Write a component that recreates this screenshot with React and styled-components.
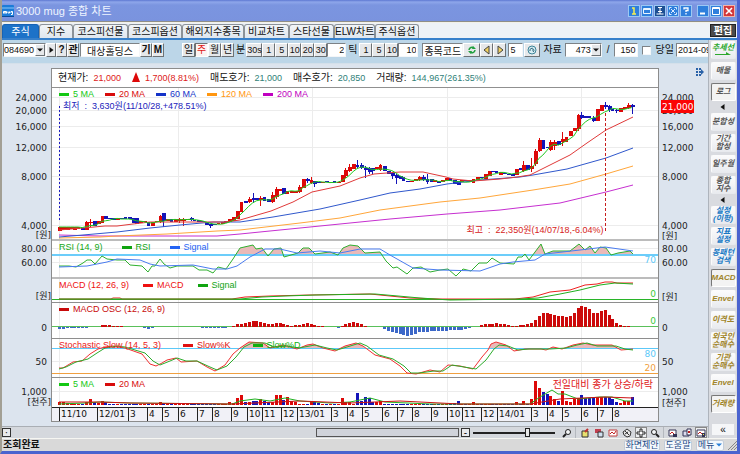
import React from "react";
import styled, { createGlobalStyle, css } from "styled-components";

const Global = createGlobalStyle`
  * { box-sizing: border-box; }
  body { margin: 0; background: #3b56c4; }
  body, button, input, select {
    font-family: "Liberation Sans", "Noto Sans CJK KR", sans-serif;
    font-size: 10px;
    line-height: 12px;
    color: #111;
  }
  button, input, select { margin: 0; padding: 0; border-radius: 0; }
`;

/* ---------- window frame ---------- */

const Window = styled.div`
  display: flex;
  flex-direction: column;
  min-height: 100vh;
  background: #dce4ee;
  border-left: 2px solid #a29f94;
  border-right: 3px solid #4a63cf;
  border-bottom: 3px solid #4a63cf;
`;

const TitleBar = styled.header`
  display: flex;
  align-items: center;
  height: 23px;
  padding: 0 1px 0 0;
  background: linear-gradient(#5d78d2, #8ea6ea 2px, #7b95e0 5px, #7a93de);
  border-bottom: 1px solid #f3f1e8;
  box-shadow: inset 0 -1px 0 #8f8e88;
`;

const Title = styled.h1`
  flex: 1;
  margin: 0 0 0 1px;
  font-size: 11px;
  line-height: 16px;
  font-weight: 400;
  color: #eef4ff;
`;

const TitleButton = styled.button`
  display: grid;
  place-items: center;
  width: 12px;
  height: 12px;
  margin-right: ${(p) => (p.$last ? 5 : 1)}px;
  border: 1px solid ${(p) => (p.$danger ? "#f4b4a8" : "#9cc8f4")};
  background: ${(p) => (p.$danger ? "#d4383c" : p.$pressed ? "#1c4f94" : "#2f7fdc")};
`;

const TabBar = styled.nav`
  display: flex;
  align-items: flex-end;
  height: 17px;
  background: #eef2f7;
  border-bottom: 2px solid #3780cb;
`;

const Tab = styled.button`
  width: ${(p) => p.$w}px;
  height: 14px;
  padding: 0;
  white-space: nowrap;
  border: 1px solid ${(p) => (p.$active ? "#1763b5" : "#8c9298")};
  border-bottom: 0;
  border-radius: 3px 3px 0 0;
  background: ${(p) => (p.$active ? "#1d72c8" : "linear-gradient(#f2f5f8, #dfe6ee)")};
  color: ${(p) => (p.$active ? "#fff" : "#111")};
`;

const EditButton = styled.button`
  align-self: center;
  width: 26px;
  height: 13px;
  margin-left: auto;
  margin-right: 1px;
  border: 1px solid #222;
  background: #4b4b4b;
  color: #fff;
  font-weight: 700;
`;

const Body = styled.div`
  display: flex;
  flex: 1;
  min-width: 0;
`;

const Work = styled.main`
  flex: 1;
  min-width: 0;
  display: flex;
  flex-direction: column;
`;

/* ---------- toolbar ---------- */

const Toolbar = styled.div`
  display: flex;
  align-items: center;
  height: 24px;
  padding: 0 0 3px 1px;
  overflow: hidden;
  background: #bcd6e8;
  border-bottom: 1px solid #d4e0ea;
`;

const Group = styled.div`
  display: flex;
  flex: none;
  align-items: center;
  gap: ${(p) => p.$gap || 0}px;
  margin-right: ${(p) => p.$after || 0}px;
`;

const inset = css`
  border: 1px solid;
  border-color: #7d8286 #f4f6f8 #f4f6f8 #7d8286;
  background: #fff;
`;

const Field = styled.input`
  flex: none;
  width: ${(p) => p.$w}px;
  height: 14px;
  padding: 0 1px;
  font-size: ${(p) => p.$size || 9}px;
  text-align: ${(p) => p.$align || "left"};
  ${inset}
`;

const Btn = styled.button`
  display: grid;
  place-items: center;
  flex: none;
  width: ${(p) => p.$w || 13}px;
  height: 14px;
  border: 1px solid;
  border-color: ${(p) => (p.$on ? "#6d7275 #fff #fff #6d7275" : "#fff #6d7275 #6d7275 #fff")};
  background: ${(p) => (p.$on ? "#fdf4f2" : "#e6e8ea")};
  color: ${(p) => (p.$on ? "#e01818" : "#111")};
  font-size: ${(p) => p.$size || 10}px;
  font-weight: ${(p) => (p.$bold ? 700 : 400)};
  white-space: nowrap;
`;

const Caption = styled.span`
  white-space: nowrap;
`;

const SelectBox = styled.span`
  display: flex;
  height: 14px;
  ${inset}
`;

const Select = styled.select`
  appearance: none;
  width: ${(p) => p.$w}px;
  padding: 0;
  border: 0;
  background: #fff;
  font-size: 9px;
  text-align-last: ${(p) => p.$align || "right"};
`;

const Arrow = styled.span`
  display: grid;
  place-items: center;
  width: 10px;
  background: #e6e8ea;
  border: 1px solid;
  border-color: #fff #6d7275 #6d7275 #fff;
`;

const Check = styled.input`
  appearance: none;
  width: 9px;
  height: 9px;
  margin: 0;
  ${inset}
`;

const CheckLabel = styled.label`
  display: flex;
  align-items: center;
  gap: 5px;
  white-space: nowrap;
`;

/* ---------- chart ---------- */

const ChartArea = styled.section`
  display: grid;
  grid-template-columns: 49px minmax(0, 1fr) 49px;
  padding: 4px 0;
`;

const Axis = styled.svg`
  display: block;
  width: 49px;
  height: 354px;
  font-family: "DejaVu Sans", "Noto Sans CJK KR", sans-serif;
  font-size: 9px;
  fill: #222;
`;

const Frame = styled.div`
  display: flex;
  flex-direction: column;
  border: 1px solid #8c8c8c;
  background: #fff;
`;

const Quote = styled.dl`
  display: flex;
  align-items: center;
  gap: 11px;
  height: 19px;
  margin: 0;
  padding: 0 6px;
  border-bottom: 1px solid #909090;
  white-space: nowrap;
  overflow: hidden;
`;

const QuoteItem = styled.div`
  display: flex;
  align-items: center;
  gap: 5px;
  dt, dd { margin: 0; }
  dd { color: ${(p) => p.$color}; font-size: 9px; }
`;

const Pane = styled.div`
  position: relative;
  height: ${(p) => p.$h}px;
  border-bottom: ${(p) => p.$rule || "1px solid #8e8e8e"};
`;

const Plot = styled.svg`
  display: block;
  width: 100%;
  height: 100%;
`;

const Legend = styled.div`
  position: absolute;
  top: 1px;
  left: 7px;
  display: flex;
  align-items: center;
  gap: ${(p) => p.$gap || 14}px;
  font-size: 9px;
  line-height: 11px;
  white-space: nowrap;
`;

const Key = styled.span`
  display: flex;
  align-items: center;
  gap: 4px;
  color: ${(p) => p.$color};
  &::before {
    content: "";
    display: ${(p) => (p.$plain ? "none" : "block")};
    width: 10px;
    height: 3px;
    background: ${(p) => p.$color};
  }
`;

const Note = styled.span`
  position: absolute;
  top: ${(p) => p.$top}px;
  left: ${(p) => p.$left || "auto"};
  right: ${(p) => p.$right || "auto"};
  display: flex;
  gap: 5px;
  font-size: ${(p) => p.$size || 9}px;
  line-height: 12px;
  white-space: nowrap;
  color: ${(p) => p.$color};
`;

const LevelNote = styled(Note)`
  font-family: "DejaVu Sans", sans-serif;
`;

const Months = styled.div`
  display: grid;
  grid-template-columns: ${(p) => p.$cols};
  height: 13px;
  background: #f1f1f7;
  font-family: "DejaVu Sans", sans-serif;
  font-size: 9px;
  line-height: 13px;
`;

const Month = styled.span`
  min-width: 0;
  padding-left: 1px;
  border-left: 1px solid #222;
  white-space: nowrap;
`;

/* ---------- bottom strips ---------- */

const ScrollStrip = styled.div`
  display: flex;
  align-items: center;
  height: 12px;
  border-top: 1px solid #aaaeb4;
  background: #d5d8dd;
`;

const StepButton = styled.button`
  display: grid;
  place-items: center;
  flex: none;
  width: 9px;
  height: 9px;
  border: 1px solid #333;
  background: #e9eaec;
  line-height: 6px;
`;

const Track = styled.div`
  display: flex;
  flex: 1;
  min-width: 0;
  margin-right: 2px;
`;

const Thumb = styled.div`
  width: 32%;
  height: 9px;
  margin-left: auto;
  border: 1px solid #555;
  background: #d0d3da;
`;

const Zoom = styled.input`
  appearance: none;
  width: 82px;
  height: 9px;
  margin: 0 6px 0 3px;
  background: linear-gradient(#222, #222) center / 100% 2px no-repeat;
  &::-webkit-slider-thumb {
    appearance: none;
    width: 5px;
    height: 9px;
    border: 1px solid #222;
    background: #e8e8e8;
  }
`;

const Tools = styled.div`
  display: flex;
  gap: 2px;
  padding-right: 1px;
`;

const Tool = styled.button`
  display: grid;
  place-items: center;
  width: 12px;
  height: 11px;
  border: 1px solid ${(p) => (p.$on ? "#888" : "transparent")};
  background: ${(p) => (p.$on ? "#eceef0" : "none")};
`;

const ToolRule = styled.span`
  width: 2px;
  border-left: 1px solid #b4b8be;
`;

const Status = styled.footer`
  display: flex;
  align-items: center;
  height: 13px;
  padding: 0 0 0 1px;
  border-top: 1px solid #f6f6f2;
  background: #d9d9d9;
`;

const StatusText = styled.strong`
  flex: 1;
  line-height: 12px;
`;

const StatusButton = styled.button`
  width: ${(p) => p.$w}px;
  height: 11px;
  margin-right: 4px;
  line-height: 9px;
  border: 1px solid #c3ccd8;
  border-radius: 2px;
  background: #f4f8fc;
  color: #1f4c86;
  white-space: nowrap;
  font-size: 9px;
`;

const StatusMenu = styled(StatusButton)`
  display: flex;
  align-items: center;
  justify-content: center;
  gap: 2px;
`;

/* ---------- side menu ---------- */

const Side = styled.aside`
  display: flex;
  flex-direction: column;
  align-items: center;
  gap: 3px;
  flex: none;
  width: 29px;
  padding: 1px 0 3px;
  border-left: 1px solid #aeb4bc;
  background: #d9dbe0;
`;

const SideButton = styled.button`
  width: 25px;
  height: 18px;
  flex: none;
  border: 1px solid;
  border-color: ${(p) => (p.$on ? "#777 #fff #fff #777" : "#fbfbfb #e8eaee #e8eaee #fbfbfb")};
  border-radius: 2px;
  background: ${(p) => (p.$on ? "#f3f3f3" : "linear-gradient(#fbfbfc, #e9ebef)")};
  color: ${(p) => p.$color || "#555"};
  font-size: 8px;
  line-height: 8px;
  font-weight: ${(p) => (p.$light ? 400 : 700)};
  font-style: italic;
  white-space: pre;
`;

const PenLine = styled.svg`
  display: block;
  margin: 0 auto;
`;

const SideArrow = styled.button`
  display: grid;
  place-items: center;
  width: 25px;
  height: 6px;
  border: 0;
  background: none;
`;

const Fold = styled.button`
  width: 22px;
  height: 11px;
  margin-top: auto;
  border: 0;
  background: #f5f6f8;
  line-height: 9px;
`;

/* ---------- data ---------- */

const RED = "#dd0808";
const BLUE = "#1414b8";
const X0 = 59;
const STEP = 3.87;
const xAt = (i) => X0 + i * STEP;

// colour, body top, body bottom, optional wick top and wick bottom
const CANDLES = `
r227,231 r227,230 r227,230 r227,229 r227,230 r227,229 b228,230 r222,230,221,230 r222,223,219,227 b221,226 r221,224
r216,223 b216,219 b218,219 b218,220 r218,220 b218,219 b217,219 b217,219 b218,223 b218,224 r221,223 r221,222 b222,226
r222,226 r221,222 r216,222,215,223 b213,221,213,227 r219,221 b219,222 r219,222 r219,221,218,223 r219,221,218,226 r219,220 b218,220,217,221
b220,221 b220,222 b221,222 b222,225 b224,226,224,228 b224,225 r223,224 r222,224 r221,223 r219,222 r217,221 r211,219
r202,212 b201,203 r199,202,197,203 b198,200,193,203 b198,200 r198,200,196,206 b197,201 b199,202 r195,202,192,203 r189,197,187,199 r189,191
b188,194 r191,194 r191,193 r191,193 r187,192,185,193 r179,188 b179,181,178,183 r180,183,177,184 b181,184,181,187 b182,183 r182,183
b181,182 r182,183 b181,183 r182,183 r175,182 r170,176,168,178 r167,171,164,172 r164,169 b165,167,160,168 b165,168,163,169 b168,170,166,178
b168,172,167,174 b168,171,168,174 r167,169 r165,170,164,171 b166,171 b171,174 b173,176,172,179 b175,178,174,184 b176,179 b177,181
b181,182 r181,182 r179,181 r177,180,176,181 b177,180,175,181 b179,182,174,184 b179,182 r180,182 b181,183 r180,182 r178,181
b178,181 b180,184 b181,185 r180,182 b180,181 r180,182 r179,183 r177,180 b177,178 r174,179 r171,176 b171,172 b171,173 r172,175
b173,174 b174,175 b174,176 r169,175 b168,170 r165,171,161,172 b165,170 r166,169,158,172 r151,164,149,166 r140,151,138,152 b140,149
b147,148 r142,150,140,151 r142,146,140,150 b141,145 r139,142,132,146 r137,142 r131,136 r128,131 r115,129,114,131 b115,118,112,119
b116,118 b116,118 b118,121,116,122 r109,121 r105,111 b105,107,102,109 b106,110,105,112 b109,111 b110,111,109,113 r108,112 r107,109
r105,108,103,109 b105,107,104,114`
  .trim()
  .split(/\s+/)
  .map((s) => {
    const n = s.slice(1).split(",").map(Number);
    return { up: s[0] === "r", top: n[0], bottom: n[1], high: n[2] ?? n[0], low: n[3] ?? n[1] };
  });

const CLOSES = CANDLES.map((c) => (c.up ? c.top : c.bottom));
const MA5 = CLOSES.map((_, i) => {
  const part = CLOSES.slice(Math.max(0, i - 4), i + 1);
  return `${xAt(i)},${part.reduce((a, b) => a + b, 0) / part.length}`;
}).join(" ");

const MA20 = "59,230 83,228 105,226 117,226 133,224 150,222 167,222 200,222 225,222 233,221 240,220 271,211 293,202 312,192 340,186 360,178 374,174 387,173 400,172 423,172 446,177 453,179 473,181 500,179 517,177 530,175 550,165 570,155 587,143 606,130 633,117";
const MA60 = "59,237 83,235 117,232 150,228 180,225 213,222 240,222 273,217 320,209 360,200 390,193 420,189 447,184 480,180 520,177 533,175 567,169 606,158 633,148";
const MA120 = "59,238 100,237 117,236 167,234 217,231 240,230 300,223 340,218 380,210 440,202 480,198 533,190 570,184 606,174 633,166";
const MA200 = "59,235 100,236 217,236 240,234 300,228 340,224 390,219 447,214 500,210 560,203 606,192 633,185";

const RSI = "59,266 69,266 76,267 83,263 87,260 91,260 95,264 102,256 107,259 117,260 125,260 130,265 142,266 148,272 152,266 155,266 160,259 164,264 170,268 177,266 193,266 199,270 207,270 213,273 218,267 226,269 233,259 240,248 253,245 256,249 262,248 268,256 274,249 281,248 284,257 298,253 303,248 309,248 315,254 330,252 338,255 343,248 350,245 358,246 365,253 380,252 386,261 393,268 397,267 407,274 413,268 421,267 430,272 440,270 448,269 456,276 463,269 471,271 479,263 487,263 492,258 500,263 514,264 518,257 522,257 525,254 529,260 535,252 541,244 545,254 553,251 570,251 579,244 585,250 590,246 595,253 600,247 606,248 611,255 618,253 630,251 633,254";
const RSI_SIGNAL = "59,267 87,266 107,262 117,259 140,260 150,264 160,266 193,265 213,269 227,269 237,266 250,257 265,249 280,249 297,253 320,251 340,253 360,249 380,249 390,255 413,268 440,270 480,271 500,264 513,262 535,260 545,254 580,250 605,247 633,251";
const MACD = "59,299 111,299 113,298 120,298 122,299 232,299 245,297 270,296 310,295 370,294 390,296 410,298 440,299 515,299 533,297 550,292 570,290 585,285 597,284 605,282 612,282 617,283 633,283";
const MACD_SIGNAL = "59,299 240,299 262,297 285,296 315,295 375,294 398,296 420,298 450,300 520,299 538,298 560,294 580,290 600,285 615,283 633,284";
const SLOW_K = "59,368 63,368 73,362 82,361 90,354 98,349 105,347 113,346 125,348 142,354 150,364 156,366 162,363 167,360 176,358 181,362 197,361 207,367 215,371 225,365 233,354 240,348 249,342 263,343 270,348 283,345 297,349 307,345 313,344 323,348 335,351 345,346 356,343 363,346 375,355 390,359 400,366 407,373 416,374 430,370 440,372 448,365 460,366 473,369 482,357 488,350 491,344 496,342 506,345 514,351 525,349 541,349 546,350 553,347 562,349 573,345 583,343 593,345 604,345 612,345 621,350 633,349";
const SLOW_D = "59,369 66,367 76,362 88,359 97,353 105,348 117,346 125,347 145,353 153,361 160,365 170,361 177,358 186,361 197,361 210,367 217,370 227,366 236,357 244,347 252,343 265,343 274,347 287,346 299,348 315,345 327,348 337,350 347,347 360,343 367,346 379,355 393,359 404,366 411,373 419,373 434,371 443,371 452,365 464,367 476,369 486,360 494,349 499,345 508,346 518,350 529,349 550,349 566,348 577,345 587,343 597,346 616,346 625,349 633,350";

// bar heights at successive positions along the time axis; the rest is interpolated
const OSC_POINTS = [[59, -2], [67, -1], [80, -1], [98, 0], [101, 2], [121, 1], [125, 0], [142, 0], [148, -2], [156, 0], [198, 0], [203, -1], [222, -1], [230, 0], [235, 2], [243, 4], [252, 6], [262, 5], [267, 3], [278, 4], [293, 1], [305, 4], [320, 1], [325, 0], [332, 0], [337, -1], [343, 2], [355, 5], [366, 1], [370, 0], [380, 0], [383, -2], [390, -5], [407, -9], [420, -5], [437, -4], [460, -3], [473, 0], [477, 0], [480, 2], [497, 4], [512, 1], [528, 3], [533, 4], [537, 9], [541, 14], [545, 14], [555, 12], [567, 10], [572, 12], [578, 20], [583, 21], [588, 19], [594, 13], [600, 16], [605, 17], [608, 13], [613, 7], [618, 3], [623, 1], [633, 0]];
const oscAt = (x) => {
  const k = OSC_POINTS.findIndex((p) => p[0] >= x);
  if (k <= 0) return OSC_POINTS[0][1];
  const [xa, a] = OSC_POINTS[k - 1];
  const [xb, b] = OSC_POINTS[k];
  return Math.round(a + ((b - a) * (x - xa)) / (xb - xa));
};

const VOLUME = {
  0: 3, 1: 3, 2: 2, 7: 3, 8: 6, 9: 3, 10: 2, 11: 4, 12: 3, 26: 3, 27: 2, 44: 3, 45: 2, 46: 7, 47: 10, 48: 3, 49: 3, 50: 4, 51: 4, 52: 6, 53: 4, 54: 3, 55: 3, 56: 10,
  57: 10, 58: 5, 59: 8, 60: 4, 61: 3, 65: 4, 66: 3, 67: 2, 73: 7, 74: 3, 75: 3, 77: 12, 78: 4, 79: 8, 80: 7, 81: 3, 82: 3, 83: 4,
  102: 2, 103: 4, 107: 3, 118: 3, 120: 4, 122: 6, 123: 24, 124: 17, 125: 13, 126: 11, 127: 9, 128: 6, 129: 4, 130: 14, 131: 4, 132: 3, 133: 6, 134: 7,
  135: 10, 136: 7, 137: 7, 138: 8, 139: 8, 140: 8, 141: 8, 142: 8, 143: 6, 144: 3, 145: 2, 146: 4, 147: 4, 148: 8,
};

const MONTHS = [[59, "11/10"], [97, "12/01"], [128, "3"], [147, "4"], [162, "5"], [178, "6"], [197, "7"], [212, "8"], [231, "9"], [247, "10"], [262, "11"], [281, "12"], [297, "13/01"], [331, "3"], [347, "4"], [362, "5"], [382, "6"], [397, "7"], [412, "8"], [431, "9"], [447, "10"], [462, "11"], [481, "12"], [497, "14/01"], [531, "3"], [547, "4"], [562, "5"], [581, "6"], [597, "7"], [612, "8"]];
const MONTH_COLS = [
  "7fr",
  ...MONTHS.map(([x], i) => `${(MONTHS[i + 1] ? MONTHS[i + 1][0] : 658) - x}fr`),
].join(" ");

const YEARS = [59, 178, 312, 447, 581];

/* ---------- chart parts ---------- */

function Canvas({ y, h, rows = [], label, children }) {
  return (
    <Plot viewBox={`52 ${y} 606 ${h}`} preserveAspectRatio="none" role="img" aria-label={label}>
      <g stroke="#ececec" shapeRendering="crispEdges">
        {YEARS.map((x) => <line key={x} x1={x} x2={x} y1={y} y2={y + h} />)}
        {rows.map((r) => <line key={r} x1="52" x2="658" y1={r} y2={r} />)}
      </g>
      {children}
    </Plot>
  );
}

const Line = ({ points, color, width = 1 }) => (
  <polyline points={points} fill="none" stroke={color} strokeWidth={width} />
);

const Level = ({ y, color, width = 1 }) => (
  <rect x="52" y={y} width="606" height={width} fill={color} shapeRendering="crispEdges" />
);

const Above = ({ id, top, level, points }) => (
  <>
    <clipPath id={id}><rect x="52" y={top} width="606" height={level - top} /></clipPath>
    <polygon points={`59,${level} ${points} 633,${level}`} fill="#e9b9b9" clipPath={`url(#${id})`} />
  </>
);

const PRICE_TICKS = [["24,000", 97], ["20,000", 110], ["16,000", 126], ["12,000", 147], ["8,000", 176], ["4,000", 225]];
const OTHER_TICKS = [["80.00", 248], ["60.00", 262], ["0", 327], ["50", 361], ["1,000", 391]];

function LeftAxis() {
  return (
    <Axis viewBox="2 68 49 354" textAnchor="end">
      {[...PRICE_TICKS, ...OTHER_TICKS].map(([t, y]) => <text key={t} x="47" y={y + 4}>{t}</text>)}
      <text x="51" y="238">[원]</text>
      <text x="51" y="299">[원]</text>
      <text x="51" y="405">[천주]</text>
    </Axis>
  );
}

function RightAxis() {
  return (
    <Axis viewBox="659 68 49 354">
      {[...PRICE_TICKS, ...OTHER_TICKS].map(([t, y]) => <text key={t} x="662" y={y + 4}>{t}</text>)}
      <text x="662" y="239">[원]</text>
      <text x="662" y="300">[원]</text>
      <text x="662" y="406">[천주]</text>
      <rect x="661" y="100" width="33" height="13" fill="#fb0505" />
      <text x="662" y="110" fill="#fff">21,000</text>
      <g fill="#2a62a8">
        {[68, 71, 74].map((y) => [696, 699].map((x) => <rect key={`${x}${y}`} x={x} y={y} width="2" height="2" />))}
        <path d="M701 69l3 3-3 3z" />
      </g>
    </Axis>
  );
}

function PricePane() {
  return (
    <Pane $h={153} $rule="2px solid #bcbcbc">
      <Canvas y={88} h={151} rows={PRICE_TICKS.map((t) => t[1])} label="주가 차트">
        <g shapeRendering="crispEdges">
          {CANDLES.map((c, i) => {
            const x = Math.round(xAt(i));
            return (
              <g key={i} fill={c.up ? RED : BLUE}>
                <rect x={x} y={c.high} width="1" height={c.low - c.high} />
                <rect x={x - 1} y={c.top} width={i % 6 === 5 ? 3 : 4} height={c.bottom - c.top} />
              </g>
            );
          })}
        </g>
        <Line points={MA200} color="#c62fd0" />
        <Line points={MA120} color="#ffa63a" />
        <Line points={MA60} color="#3058cc" />
        <Line points={MA20} color="#e03a3a" />
        <Line points={MA5} color="#1fc81f" />
        <g shapeRendering="crispEdges" strokeWidth="1">
          <line x1="59.5" x2="59.5" y1="106" y2="221" stroke="#2020c0" strokeDasharray="2 2" />
          <line x1="605.5" x2="605.5" y1="113" y2="233" stroke="#c81e1e" strokeDasharray="3 2" />
        </g>
      </Canvas>
      <Legend $gap={11}>
        <Key $color="#14c814">5 MA</Key>
        <Key $color="#d80c0c">20 MA</Key>
        <Key $color="#1432c8">60 MA</Key>
        <Key $color="#ff9610">120 MA</Key>
        <Key $color="#c000c0">200 MA</Key>
      </Legend>
      <Note $top={12} $left="11px" $color="#2222bb">
        <span>최저</span><span>:</span><span>3,630원(11/10/28,+478.51%)</span>
      </Note>
      <Note $top={136} $right="9%" $color="#d62222">
        <span>최고</span><span>:</span><span>22,350원(14/07/18,-6.04%)</span>
      </Note>
    </Pane>
  );
}

function RsiPane() {
  return (
    <Pane $h={38} $rule="2px solid #bcbcbc">
      <Canvas y={241} h={36} rows={[248, 262]} label="RSI">
        <Above id="rsi" top={241} level={255} points={RSI} />
        <Level y={254} color="#6ccdfa" width={2} />
        <Line points={RSI} color="#2eb02e" />
        <Line points={RSI_SIGNAL} color="#4a7cf0" />
      </Canvas>
      <Legend $gap={19}>
        <Key $plain $color="#14a814">RSI (14, 9)</Key>
        <Key $color="#10a410">RSI</Key>
        <Key $color="#2464f4">Signal</Key>
      </Legend>
      <LevelNote $top={13} $right="2px" $color="#5cc8f8">70</LevelNote>
    </Pane>
  );
}

function MacdPane() {
  return (
    <Pane $h={24}>
      <Canvas y={279} h={23} label="MACD">
        <Level y={299} color="#28b428" />
        <Line points={MACD} color="#ee2020" />
        <Line points={MACD_SIGNAL} color="#20b020" />
      </Canvas>
      <Legend>
        <Key $plain $color="#ee1010">MACD (12, 26, 9)</Key>
        <Key $color="#ee1010">MACD</Key>
        <Key $color="#10a410">Signal</Key>
      </Legend>
      <LevelNote $top={9} $right="2px" $color="#3cc83c">0</LevelNote>
    </Pane>
  );
}

function OscPane() {
  return (
    <Pane $h={36}>
      <Canvas y={303} h={35} label="MACD OSC">
        <Level y={326} color="#5ac05a" />
        <g shapeRendering="crispEdges">
          {CANDLES.map((_, i) => {
            const v = oscAt(xAt(i));
            return (
              <rect
                key={i}
                x={Math.round(xAt(i)) - 1}
                y={v > 0 ? 327 - v : 327}
                width="3"
                height={Math.abs(v)}
                fill={v > 0 ? "#cc0a0a" : "#3c68c8"}
              />
            );
          })}
        </g>
      </Canvas>
      <Legend><Key $color="#c80a0a">MACD OSC (12, 26, 9)</Key></Legend>
      <LevelNote $top={12} $right="2px" $color="#3cc83c">0</LevelNote>
    </Pane>
  );
}

function StochasticPane() {
  return (
    <Pane $h={39}>
      <Canvas y={339} h={38} rows={[361]} label="Stochastic Slow">
        <Above id="stoch" top={339} level={349} points={SLOW_K} />
        <Level y={348} color="#5cc8f8" />
        <Level y={373} color="#f0a040" />
        <Line points={SLOW_K} color="#f03030" />
        <Line points={SLOW_D} color="#2cac2c" />
      </Canvas>
      <Legend $gap={22}>
        <Key $plain $color="#e82020">Stochastic Slow (14, 5, 3)</Key>
        <Key $color="#e01010">Slow%K</Key>
        <Key $color="#10b010">Slow%D</Key>
      </Legend>
      <LevelNote $top={9} $right="2px" $color="#5cc8f8">80</LevelNote>
      <LevelNote $top={23} $right="2px" $color="#f0a040">20</LevelNote>
    </Pane>
  );
}

function VolumePane() {
  return (
    <Pane $h={30} $rule="1px solid #222">
      <Canvas y={378} h={29} rows={[391]} label="거래량">
        <g shapeRendering="crispEdges">
          {CANDLES.map((c, i) => {
            const v = VOLUME[i] ?? 1;
            return <rect key={i} x={Math.round(xAt(i)) - 1} y={405 - v} width="3" height={v} fill={c.up ? RED : BLUE} />;
          })}
        </g>
        <Line points="59,404 85,403 100,402 130,403 232,404 240,401 255,399 270,401 285,398 300,401 330,403 350,402 370,398 385,402 430,404 530,404 540,397 552,390 558,394 565,394 578,399 600,397 612,397 625,401 633,401" color="#20b020" />
        <Line points="59,402 100,402 130,403 232,404 300,401 350,403 400,401 460,404 530,404 560,399 605,397 633,398" color="#cc1414" />
      </Canvas>
      <Legend $gap={11}>
        <Key $color="#14c814">5 MA</Key>
        <Key $color="#d80c0c">20 MA</Key>
      </Legend>
      <Note $top={1} $right="5px" $size={10} $color="#e02020">전일대비 종가 상승/하락</Note>
    </Pane>
  );
}

/* ---------- toolbar and menus ---------- */

const Tri = ({ dir = "down", size = 6, color = "#111" }) => (
  <svg width={size} height={size} viewBox="0 0 6 6" aria-hidden="true">
    <path fill={color} d={{ down: "M0 1.5h6l-3 3z", right: "M1.5 0v6l4-3z", left: "M4.5 0v6l-4-3z" }[dir]} />
  </svg>
);

const Logo = () => (
  <svg width="13" height="14" viewBox="0 0 13 14" aria-hidden="true">
    <rect x="0" y="1" width="12" height="12" rx="1" fill="#1c7cd8" />
    <path d="M0 4h12" stroke="#8cc8f8" />
    <path d="M1.500 9.500V7.500h1.500v2V7.500H4.500v2M6 7.500v1.500h1.500V7.500M9 7.500h1.500v3H9M9 9V7.500" stroke="#fff" fill="none" />
    <path d="M0 12.500h12" stroke="#0c4c98" />
  </svg>
);

const TITLE_ICONS = [
  ["첫 화면", <path d="M3 2h2v6M3 8h4" stroke="#f8f050" strokeWidth="1.500" fill="none" />, {}],
  ["창", <path d="M1.500 2.500h7v5h-7zM1.500 3.500h7" stroke="#e8f4ff" fill="none" />, {}],
  ["고정", <path d="M3 1.500h4M5 2v3M3 5.500h4M1.500 8h7M5 6v2" stroke="#fff" fill="none" />, { $pressed: true }],
  ["전체", <path d="M1.500 3.500v-2h2M6.500 1.500h2v2M8.500 6.500v2h-2M3.500 8.500h-2v-2M3 3l4 4M7 3L3 7" stroke="#dcecff" fill="none" />, {}],
  ["도움말", <path d="M3 3.500V2h4v2.500H5V6M5 7v1.500" stroke="#fff" strokeWidth="1.300" fill="none" />, { $last: true }],
  ["최소화", <path d="M2 7.500h5" stroke="#fff" strokeWidth="2" />, {}],
  ["최대화", <path d="M1.500 1.500h7v7h-7zM1.500 2.500h7" stroke="#fff" fill="none" />, {}],
  ["닫기", <path d="M2 2l6 6M8 2L2 8" stroke="#fff" strokeWidth="1.600" />, { $danger: true }],
];

const TABS = [["주식", 37], ["지수", 34], ["코스피선물", 55], ["코스피옵션", 54], ["해외지수종목", 62], ["비교차트", 45], ["스타선물", 45], ["ELW차트", 41], ["주식옵션", 44]];

const GOLD = "#a08428";
const SKY = "#1878c4";
const SIDE = [
  ["추세선", "#2ca82c", false, true], ["매물"], ["로그", null, true], null,
  ["분합성"], ["기간\n합성"], ["일주월"], ["종합\n지수"], null,
  ["설정\n(이평)", SKY], ["지표\n설정", SKY], ["봉패턴\n검색", SKY],
  ["MACD", GOLD, true], ["Envel", GOLD], ["이격도", GOLD], ["외국인\n순매수", GOLD], ["기관\n순매수", GOLD], ["Envel", GOLD], ["거래량", GOLD, true],
];

const TOOL_ICONS = [
  ["돋보기", <><circle cx="6" cy="4" r="2.500" fill="#f4f6f8" stroke="#222" /><path d="M4 6L1 9" stroke="#222" strokeWidth="2" /></>],
  null,
  ["편집", <><path d="M2 3h6v6H2z" fill="#e8e070" stroke="#333" /><path d="M5 4l3-3" stroke="#c03030" strokeWidth="2" /></>],
  ["복사", <><path d="M1 1h6v4H1z" fill="#c04050" /><path d="M4 4h5v5H4z" fill="#d0e0f0" stroke="#333" /></>],
  ["차트", <><path d="M1 2h8v6H1z" fill="#fff" stroke="#c04040" /><path d="M2 6l2-2 2 2 2-3" stroke="#c02020" fill="none" /></>],
  ["회전", <><path d="M1 4l4-3 4 3-1 4-3 1-3-2z" fill="#e8e8e8" stroke="#333" /><path d="M3 3l4 4M3 6l3-2" stroke="#333" /></>],
  ["이동", <path d="M4 1h2v3h3v2H6v3H4V6H1V4h3z" fill="#fff" stroke="#222" />, true],
  ["확대", <><circle cx="4" cy="4" r="2.500" fill="#f4f6f8" stroke="#222" /><path d="M6 6l3 3" stroke="#222" strokeWidth="2" /></>],
  null,
  ["저장", <><path d="M1 2h7v6H1z" fill="#fff" stroke="#335" /><path d="M2 6l2-2 2 2" stroke="#c02020" fill="none" /><path d="M5 6h4v3H5z" fill="#335" /></>],
  ["불러오기", <><path d="M1 3h6v5H1z" fill="#dde" stroke="#335" /><path d="M5 1h4v6H5z" fill="#fff" stroke="#335" /><path d="M6 3h2v2H6z" fill="#c02020" /></>],
  ["십자선", <><path d="M1 2h8v6H1z" fill="#fff" stroke="#335" /><path d="M2 6l2-2 2 2" stroke="#c02020" fill="none" /><path d="M6 5h3v4H6z" fill="#335" /><path d="M7 6h1v1H7z" fill="#f0e040" /></>, true],
];

const Glyph = ({ children }) => <svg width="10" height="10" viewBox="0 0 10 10" aria-hidden="true">{children}</svg>;

function ChartToolbar() {
  return (
    <Toolbar>
      <Group $after={1}>
        <SelectBox>
          <Select $w={31} $align="left" aria-label="종목코드"><option>084690</option></Select>
          <Arrow><Tri /></Arrow>
        </SelectBox>
        <Btn $w={10} aria-label="다음"><Tri dir="right" /></Btn>
        <Btn $w={11} $bold>?</Btn>
        <Btn $w={12} $bold>관</Btn>
      </Group>
      <Group $after={18}>
        <Field $w={60} $size={10} $align="center" defaultValue="대상홀딩스" aria-label="종목명" />
        <Btn $w={12} $bold>기</Btn>
        <Btn $w={12} $bold>M</Btn>
      </Group>
      <Group $after={2}>
        <Btn>일</Btn>
        <Btn $on>주</Btn>
        <Btn>월</Btn>
        <Btn>년</Btn>
      </Group>
      <Group $after={2} $gap={1}>
        <Caption>분</Caption>
        <Group>
          {["30s", "1", "5", "10", "20", "30"].map((t) => <Btn key={t} $size={9} $w={t === "30s" ? 16 : 13}>{t}</Btn>)}
          <Field $w={19} $align="right" defaultValue="2" aria-label="분" />
        </Group>
      </Group>
      <Group $after={4} $gap={2}>
        <Caption>틱</Caption>
        <Group>
          {["1", "5", "10"].map((t) => <Btn key={t} $size={9}>{t}</Btn>)}
          <Field $w={20} $align="right" defaultValue="10" aria-label="틱" />
        </Group>
      </Group>
      <Group $after={2}>
        <Field $w={41} $size={10} defaultValue="종목코드를" aria-label="종목코드 입력" />
        <Btn $w={17} aria-label="새로고침">
          <Glyph>
            <path d="M2 5a3 3 0 0 1 5-2M8 5a3 3 0 0 1-5 2" stroke="#20a040" strokeWidth="1.500" fill="none" />
            <path d="M6 1l3 3H5zM4 9L1 6h4z" fill="#20a040" />
          </Glyph>
        </Btn>
        <Btn $w={13} aria-label="이전"><Glyph><path d="M7 1v8L2 5z" fill="#f0d060" stroke="#444" /></Glyph></Btn>
        <Btn $w={13} aria-label="다음 종목"><Glyph><path d="M3 1v8l5-4z" fill="#f0d060" stroke="#444" /></Glyph></Btn>
      </Group>
      <Group $after={3} $gap={1}>
        <Field $w={15} defaultValue="5" aria-label="간격" />
        <Btn $w={16} aria-label="설정">
          <Glyph>
            <circle cx="5" cy="5" r="4" fill="#d8eef4" stroke="#3c8498" />
            <path d="M3 6a2 2 0 1 1 3 1M5 5h1" stroke="#2c6478" fill="none" />
          </Glyph>
        </Btn>
      </Group>
      <Group $after={5} $gap={3}>
        <Caption>자료</Caption>
        <SelectBox>
          <Select $w={25} aria-label="자료"><option>473</option></Select>
          <Arrow><Tri /></Arrow>
        </SelectBox>
      </Group>
      <Group $after={4} $gap={4}>
        <Caption>/</Caption>
        <Field $w={24} $align="right" defaultValue="150" aria-label="표시 개수" />
      </Group>
      <Group $gap={2}>
        <CheckLabel><Check type="checkbox" />당일</CheckLabel>
        <Field $w={60} defaultValue="2014-09-01" aria-label="날짜" />
      </Group>
    </Toolbar>
  );
}

export default function App() {
  return (
    <Window>
      <Global />
      <TitleBar>
        <Logo />
        <Title>3000 mug 종합 차트</Title>
        {TITLE_ICONS.map(([name, icon, props]) => (
          <TitleButton key={name} aria-label={name} {...props}><Glyph>{icon}</Glyph></TitleButton>
        ))}
      </TitleBar>
      <TabBar>
        {TABS.map(([name, w], i) => <Tab key={name} $w={w} $active={i === 0}>{name}</Tab>)}
        <EditButton>편집</EditButton>
      </TabBar>
      <Body>
        <Work>
          <ChartToolbar />
          <ChartArea>
            <LeftAxis />
            <Frame>
              <Quote>
                <QuoteItem $color="#dd2020"><dt>현재가:</dt><dd>21,000</dd></QuoteItem>
                <QuoteItem $color="#dd2020">
                  <dt><svg width="8" height="10" viewBox="0 0 8 10" aria-label="상승"><path d="M4 0l2 5 2 5H0l2-5z" fill="#dd0808" /></svg></dt>
                  <dd>1,700(8.81%)</dd>
                </QuoteItem>
                <QuoteItem $color="#2f7f78"><dt>매도호가:</dt><dd>21,000</dd></QuoteItem>
                <QuoteItem $color="#2f7f78"><dt>매수호가:</dt><dd>20,850</dd></QuoteItem>
                <QuoteItem $color="#2f7f78"><dt>거래량:</dt><dd>144,967(261.35%)</dd></QuoteItem>
              </Quote>
              <PricePane />
              <RsiPane />
              <MacdPane />
              <OscPane />
              <StochasticPane />
              <VolumePane />
              <Months $cols={MONTH_COLS}>
                <span />
                {MONTHS.map(([x, t]) => <Month key={x}>{t}</Month>)}
              </Months>
            </Frame>
            <RightAxis />
          </ChartArea>
          <ScrollStrip>
            <StepButton aria-label="왼쪽으로">·</StepButton>
            <Track><Thumb /></Track>
            <StepButton aria-label="축소">-</StepButton>
            <Zoom type="range" defaultValue="67" aria-label="확대 비율" />
            <Tools>
              {TOOL_ICONS.map((t, i) =>
                t ? <Tool key={t[0]} aria-label={t[0]} $on={t[2]}><Glyph>{t[1]}</Glyph></Tool> : <ToolRule key={i} />
              )}
            </Tools>
          </ScrollStrip>
        </Work>
        <Side>
          {SIDE.map((s, i) =>
            s ? (
              <SideButton key={i} $color={s[1]} $on={s[2]}>
                {s[0]}
                {s[3] && (
                  <PenLine width="16" height="4" viewBox="0 0 16 4" aria-hidden="true">
                    <path d="M0 2.500h12" stroke="#2ca82c" />
                    <path d="M11 0l5 3h-5z" fill="#2ca82c" />
                  </PenLine>
                )}
              </SideButton>
            ) : (
              <SideArrow key={i} aria-label="접기"><Tri dir="left" /></SideArrow>
            )
          )}
          <Fold>«</Fold>
        </Side>
      </Body>
      <Status>
        <StatusText>조회완료</StatusText>
        <StatusButton $w={36}>화면제안</StatusButton>
        <StatusButton $w={28}>도움말</StatusButton>
        <StatusMenu $w={28}>메뉴<Tri color="#2a80d8" /></StatusMenu>
        <svg width="9" height="9" viewBox="0 0 9 9" aria-hidden="true">
          <path d="M9 0L0 9M9 3L3 9M9 6L6 9" stroke="#888" />
        </svg>
      </Status>
    </Window>
  );
}
